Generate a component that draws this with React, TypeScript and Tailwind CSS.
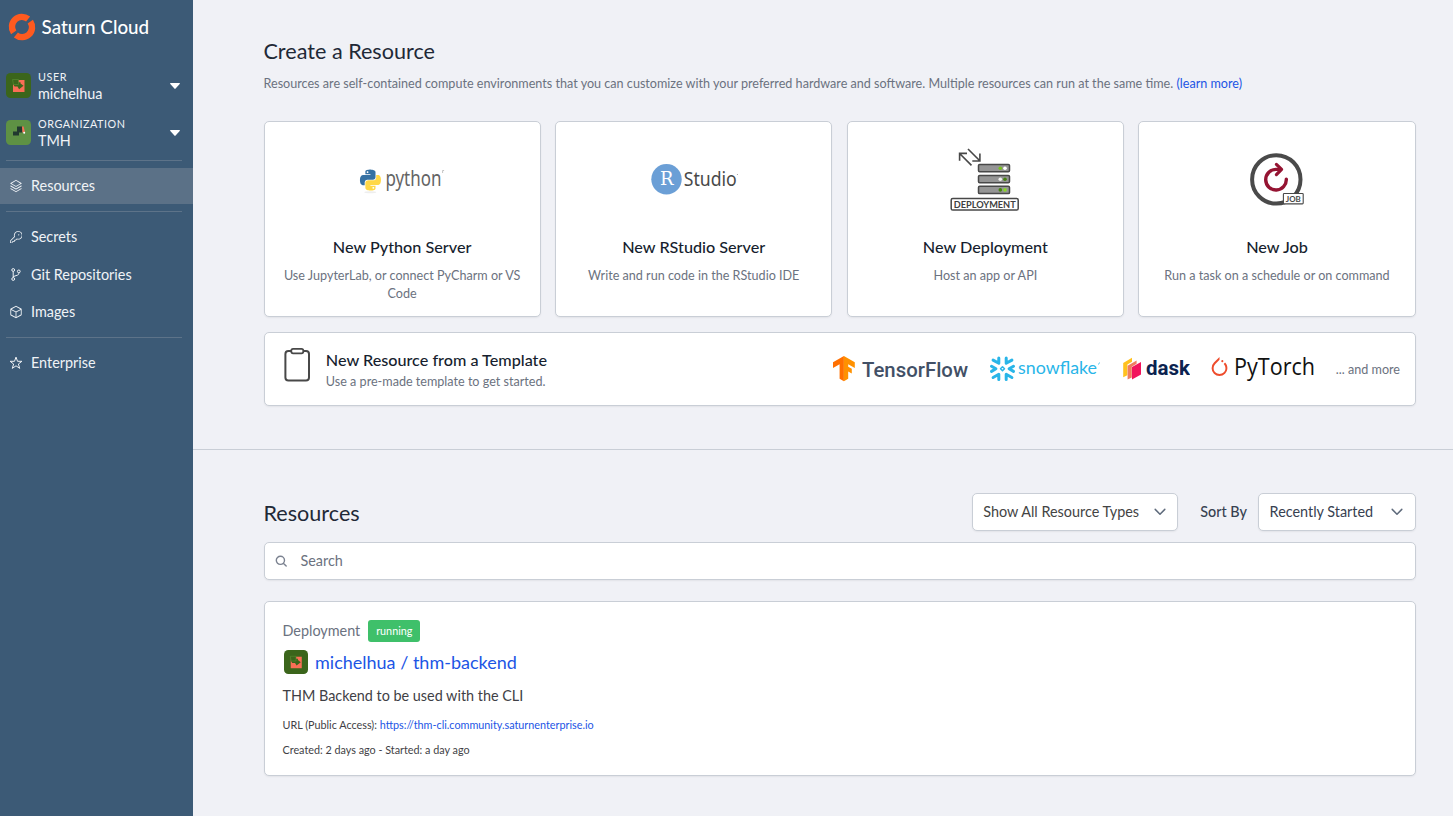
import type { ReactNode } from "react";
import { PiStack, PiCube } from "react-icons/pi";
import { GoKey } from "react-icons/go";
import { SiPytorch } from "react-icons/si";

const card = "rounded-[5px] border border-[#c9ced6] bg-white shadow-[0_1px_2px_rgba(0,0,0,0.06)]";

function SaturnLogo() {
  return (
    <svg width="28" height="28" viewBox="0 0 28 28" className="shrink-0">
      <g fill="none" stroke="#ff5a1f" strokeWidth="6.4">
        <path d="M5.7 19.4A9.9 9.9 0 0 1 20.1 6.1" />
        <path d="M22.3 8.6A9.9 9.9 0 0 1 7.9 21.9" />
      </g>
    </svg>
  );
}

function UserAvatar({ size }: { size: number }) {
  return (
    <svg width={size} height={size} viewBox="0 0 25 25" className="shrink-0">
      <rect width="25" height="25" rx="4.5" fill="#3b651b" />
      <rect x="7" y="7" width="11.5" height="12" fill="#fa6e56" />
      <path d="M6 6h6.5v3.2h2v1.2l3 2.4-4.4 3.4-1.6-2.6H8.6L7 11z" fill="#3b651b" />
      <path d="M6.5 6.5h6v5h-5z" fill="none" stroke="#5a8f34" strokeWidth=".6" />
    </svg>
  );
}

function OrgAvatar() {
  return (
    <svg width="25" height="25" viewBox="0 0 25 25" className="shrink-0">
      <rect width="25" height="25" rx="4.5" fill="#5e9144" />
      <path d="M11 6.5h5.3v6H13v3H7v-4h4z" fill="#21392f" />
      <path d="M16 6.5h1.6l1.4 6h-2.5z" fill="#fa6e56" />
      <circle cx="18.2" cy="12.8" r="1" fill="#fff" />
    </svg>
  );
}

function Account({ label, name, avatar }: { label: string; name: string; avatar: ReactNode }) {
  return (
    <div className="flex h-[47px] items-center pl-[6px] pr-[13px]">
      {avatar}
      <div className="ml-[7px] flex-1">
        <div className="text-[10.8px] leading-[15px] tracking-[0.54px]">{label}</div>
        <div className="pt-px text-[14.4px] leading-[18px]">{name}</div>
      </div>
      <svg width="10" height="6" viewBox="0 0 10 6">
        <path d="M.6 0h8.8a.5.5 0 0 1 .3.9L5.6 5.6a.8.8 0 0 1-1.2 0L.3.9A.5.5 0 0 1 .6 0z" fill="#fff" />
      </svg>
    </div>
  );
}

function StarIcon() {
  return (
    <svg width="14" height="14" viewBox="0 0 14 14" fill="none" stroke="currentColor" strokeWidth="1" strokeLinejoin="round">
      <path d="M7 1.1l1.5 4.2h4.4L9.4 8l1.3 4.4L7 9.8l-3.7 2.6L4.6 8 1.1 5.3h4.4z" />
    </svg>
  );
}

function BranchIcon() {
  return (
    <svg width="14" height="14" viewBox="0 0 14 14" fill="none" stroke="currentColor" strokeWidth="1">
      <circle cx="4.2" cy="2" r="1.4" />
      <circle cx="4.2" cy="11" r="1.4" />
      <circle cx="9.8" cy="3.4" r="1.4" />
      <path d="M4.2 3.4v6.2M9.8 4.8v.6c0 1-.6 1.5-1.5 1.8L4.2 8.6" />
    </svg>
  );
}

function NavItem({ icon, label, active }: { icon: ReactNode; label: string; active?: boolean }) {
  return (
    <div className={`flex h-[36px] items-center gap-[8px] pl-[9px] text-[14.4px] ${active ? "bg-[#5b7187]" : ""}`}>
      <span className="flex w-[14px] justify-center">{icon}</span>
      <span>{label}</span>
    </div>
  );
}

function Rule() {
  return <div className="ml-[6px] mr-[11px] h-px bg-[#5d7389]" />;
}

function Sidebar() {
  return (
    <aside className="flex w-[193px] shrink-0 flex-col bg-[#3c5a76] text-[#f0f3f6]">
      <div className="flex h-[54px] items-center gap-[5.6px] pl-[8px] text-[18.8px] font-medium text-white">
        <SaturnLogo />
        <span className="pt-px">Saturn Cloud</span>
      </div>
      <div className="h-[8px]" />
      <Account label="USER" name="michelhua" avatar={<UserAvatar size={25} />} />
      <Account label="ORGANIZATION" name="TMH" avatar={<OrgAvatar />} />
      <div className="h-[4px]" />
      <Rule />
      <div className="h-[7px]" />
      <NavItem active icon={<PiStack size={14} className="shrink-0" />} label="Resources" />
      <div className="h-[7px]" />
      <Rule />
      <div className="flex flex-col gap-[1.5px] pb-[7px] pt-[7px]">
        <NavItem icon={<GoKey size={12.5} />} label="Secrets" />
        <NavItem icon={<BranchIcon />} label="Git Repositories" />
        <NavItem icon={<PiCube size={14} className="shrink-0" />} label="Images" />
      </div>
      <Rule />
      <div className="h-[7px]" />
      <NavItem icon={<StarIcon />} label="Enterprise" />
    </aside>
  );
}

function PythonLogo() {
  return (
    <svg width="90" height="36" viewBox="-0.8 -3 90 36" overflow="visible">
      <ellipse cx="12.5" cy="27.2" rx="6" ry="1" fill="#eeeeee" />
      <g transform="translate(2.2 4.6) scale(.87)">
        <path
          fill="#3571a3"
          d="M14.25.18l.9.2.73.26.59.3.45.32.34.34.25.34.16.33.1.3.04.26.02.2-.01.13V8.5l-.05.63-.13.55-.21.46-.26.38-.3.31-.33.25-.35.19-.35.14-.33.1-.3.07-.26.04-.21.02H8.77l-.69.05-.59.14-.5.22-.41.27-.33.32-.27.35-.2.36-.15.37-.1.35-.07.32-.04.27-.02.21v3.06H3.17l-.21-.03-.28-.07-.32-.12-.35-.18-.36-.26-.36-.36-.35-.46-.32-.59-.28-.73-.21-.88-.14-1.05-.05-1.23.06-1.22.16-1.04.24-.87.32-.71.36-.57.4-.44.42-.33.42-.24.4-.16.36-.1.32-.05.24-.01h.16l.06.01h8.16v-.83H6.18l-.01-2.75-.02-.37.05-.34.11-.31.17-.28.25-.26.31-.23.38-.2.44-.18.51-.15.58-.12.64-.1.71-.06.77-.04.84-.02 1.27.05zm-6.3 1.98l-.23.33-.08.41.08.41.23.34.33.22.41.09.41-.09.33-.22.23-.34.08-.41-.08-.41-.23-.33-.33-.22-.41-.09-.41.09z"
        />
        <path
          fill="#ffd847"
          d="M21.04 6.11l.28.06.32.12.35.18.36.27.36.35.35.47.32.59.28.73.21.88.14 1.04.05 1.23-.06 1.23-.16 1.04-.24.86-.32.71-.36.57-.4.45-.42.33-.42.24-.4.16-.36.09-.32.05-.24.02-.16-.01h-8.22v.82h5.84l.01 2.76.02.36-.05.34-.11.31-.17.29-.25.25-.31.24-.38.2-.44.17-.51.15-.58.13-.64.09-.71.07-.77.04-.84.01-1.27-.04-1.07-.14-.9-.2-.73-.25-.59-.3-.45-.33-.34-.34-.25-.34-.16-.33-.1-.3-.04-.25-.02-.2.01-.13v-5.34l.05-.64.13-.54.21-.46.26-.38.3-.32.33-.24.35-.2.35-.14.33-.1.3-.06.26-.04.21-.02.13-.01h5.84l.69-.05.59-.14.5-.21.41-.28.33-.32.27-.35.2-.36.15-.36.1-.35.07-.32.04-.28.02-.21V6.07h2.09l.14.01zm-6.47 14.14l-.23.33-.08.41.08.41.23.33.33.23.41.08.41-.08.33-.23.23-.33.08-.41-.08-.41-.23-.33-.33-.23-.41-.08-.41.08z"
        />
      </g>
      <text x="27.6" y="20.6" fontSize="21" textLength="56" lengthAdjust="spacingAndGlyphs" fill="#646464" className="font-['Noto_Sans',sans-serif]">
        python
      </text>
      <path d="M84.8 8v-2.5h1.5" stroke="#aaa" strokeWidth=".7" fill="none" />
    </svg>
  );
}

function RStudioLogo() {
  return (
    <svg width="90" height="36" viewBox="0 -2 90 36" overflow="visible">
      <circle cx="17.5" cy="15.2" r="15.2" fill="#6b9fd6" />
      <text x="11" y="21.2" fontSize="18" textLength="13.5" lengthAdjust="spacingAndGlyphs" fill="#fff" className="font-['DejaVu_Serif',serif]">
        R
      </text>
      <text x="34.8" y="22.2" fontSize="19.5" textLength="53" lengthAdjust="spacingAndGlyphs" fill="#484848" className="font-['Noto_Sans',sans-serif]">
        Studio
      </text>
      <circle cx="88.4" cy="10.4" r=".5" fill="#888" />
    </svg>
  );
}

function DeploymentLogo() {
  return (
    <svg width="72" height="66" viewBox="-0.3 -0.2 72 66">
      <g stroke="#484848" strokeWidth="1.6" fill="none">
        <path d="M22.2 18.2L10.8 6.8M10.3 13.6V6.2h7.4" />
        <path d="M18.7 1.8L30 13M23 13.8h7.6V6.4" />
      </g>
      <g fill="#959595" stroke="#484848" strokeWidth="1.5">
        <rect x="29.2" y="17.2" width="31" height="7.4" rx="1.2" />
        <rect x="29.2" y="28.2" width="31" height="7.4" rx="1.2" />
        <rect x="29.2" y="39" width="31" height="7.4" rx="1.2" />
      </g>
      <circle cx="51" cy="21" r="1.8" fill="#78c21c" />
      <circle cx="55.7" cy="21" r="1.8" fill="#fff" />
      <circle cx="51" cy="32" r="1.8" fill="#eee" />
      <circle cx="55.7" cy="32" r="1.8" fill="#478211" />
      <circle cx="51" cy="42.7" r="1.8" fill="#478211" />
      <circle cx="55.7" cy="42.7" r="1.8" fill="#8ad62a" />
      <rect x="1.9" y="51.2" width="67" height="11.6" rx="1.6" fill="#fff" stroke="#484848" strokeWidth="1.5" />
      <text x="4.4" y="60.6" fontSize="10" textLength="62" lengthAdjust="spacingAndGlyphs" fill="#404040" className="font-['Lato',sans-serif] font-bold">
        DEPLOYMENT
      </text>
    </svg>
  );
}

function JobLogo() {
  return (
    <svg width="56" height="56" viewBox="0.4 0 56 56">
      <circle cx="27.7" cy="27.4" r="24.2" fill="none" stroke="#4a4a4a" strokeWidth="4" />
      <g transform="translate(.4 -.2)">
        <path d="M37.3 27.4A10.3 10.3 0 1 1 27 17.6h4.6" fill="none" stroke="#951432" strokeWidth="3.4" strokeLinecap="round" />
        <path d="M27.4 12.6l5.2 5-5.2 5.2" fill="none" stroke="#951432" strokeWidth="3.2" strokeLinecap="round" strokeLinejoin="round" />
      </g>
      <rect x="34.8" y="41.5" width="19.8" height="10.4" rx=".8" fill="#fff" stroke="#484848" strokeWidth="1.1" />
      <text x="37.2" y="49.8" fontSize="8.4" textLength="15" lengthAdjust="spacingAndGlyphs" fill="#484848" className="font-['Lato',sans-serif] font-bold">
        JOB
      </text>
    </svg>
  );
}

function ResourceCard({ logo, title, text }: { logo: ReactNode; title: string; text: string }) {
  return (
    <div className={`${card} flex h-[196px] flex-col items-center text-center`}>
      <div className="flex h-[115px] items-center justify-center">{logo}</div>
      <div className="-mt-px text-[16.2px] font-medium leading-[22px] text-[#161e2e]">{title}</div>
      <div className="mt-[9px] px-[14px] text-[12.6px] leading-[18px] text-[#6b7280]">{text}</div>
    </div>
  );
}

function TensorFlowLogo() {
  return (
    <svg width="138" height="28" viewBox="0 0 138 28">
      <path d="M12.9 1v25.2l-4.3-2.4V9.2L2 12.9V7.2z" fill="#ff6f00" />
      <path d="M12.9 1v25.2l4.3-2.4v-7.2l3.6 2v-4.8l-3.6-2V9.2l6.6 3.7V7.2z" fill="#ff9100" />
      <text x="31" y="21.8" fontSize="20" textLength="106" lengthAdjust="spacingAndGlyphs" fill="#425066" className="font-['Roboto',sans-serif] font-medium">
        TensorFlow
      </text>
    </svg>
  );
}

function SnowflakeLogo() {
  return (
    <div className="flex items-center gap-[3px]">
      <svg width="25" height="25" viewBox="-12.5 -11.8 25 25" fill="none" stroke="#29b5e8" strokeWidth="3" strokeLinecap="round" strokeLinejoin="round" overflow="visible">
        <path d="M3.7-10.7v5.2l5.7-3.2M-3.7-10.7v5.2l-5.7-3.2M3.7 10.7V5.5l5.7 3.2M-3.7 10.7V5.5l-5.7 3.2" />
        <path d="M11-2.6L6.6 0 11 2.6M-11-2.6L-6.6 0-11 2.6" />
        <path d="M0-2L2 0 0 2-2 0z" strokeWidth="1.5" />
      </svg>
      <svg width="83" height="26" viewBox="0 0 83 26">
        <text x="0" y="17.5" fontSize="18" textLength="79" lengthAdjust="spacingAndGlyphs" fill="#29b5e8" className="font-['Lato',sans-serif]">
          snowflake
        </text>
        <path d="M80.5 8.5l1-2" stroke="#29b5e8" strokeWidth=".8" />
      </svg>
    </div>
  );
}

function DaskLogo() {
  return (
    <svg width="68" height="26" viewBox="0 0 68 26">
      <g transform="translate(0 -.6)">
        <path d="M1.2 7.6L10 2.4v4L5.4 9.2v10.6l-4.2 2.1z" fill="#ffc11e" />
        <path d="M5.6 10.4L14.6 5v3.4L9.8 11.3V22l-4.2 2z" fill="#ef7d5f" />
        <path d="M10 11.7l9-5v12.5l-9 5z" fill="#f2145c" />
      </g>
      <text x="24" y="18.6" fontSize="20" textLength="44" lengthAdjust="spacingAndGlyphs" fill="#0b2350" className="font-['Roboto',sans-serif] font-bold">
        dask
      </text>
    </svg>
  );
}

function PyTorchLogo() {
  return (
    <div className="flex items-center gap-[4.5px]">
      <SiPytorch size={19} color="#ee4c2c" className="mb-[6px]" />
      <svg width="82" height="36" viewBox="0 -2 82 36" overflow="visible">
        <text x="0" y="22" fontSize="24" textLength="81" lengthAdjust="spacingAndGlyphs" fill="#111" className="font-['Open_Sans',sans-serif]">
          PyTorch
        </text>
      </svg>
    </div>
  );
}

function Chevron() {
  return (
    <svg width="12" height="8" viewBox="0 0 12 8">
      <path d="M1.2 1.4L6 6.2l4.8-4.8" fill="none" stroke="#5f6b7c" strokeWidth="1.5" strokeLinecap="round" strokeLinejoin="round" />
    </svg>
  );
}

export default function App() {
  return (
    <div className="flex h-[816px] w-[1453px] overflow-hidden bg-[#f0f1f6] font-['Lato',sans-serif]">
      <Sidebar />
      <main className="flex min-w-0 flex-1 flex-col">
        <section className="h-[450px] border-b border-[#c9ced6] pl-[70.5px] pr-[37.4px] pt-[37px]">
          <h1 className="text-[21.6px] leading-[29px] text-[#1f2937]">Create a Resource</h1>
          <p className="mt-[9px] text-[12.6px] leading-[18px] text-[#6b7280]">
            Resources are self-contained compute environments that you can customize with your preferred hardware and software. Multiple
            resources can run at the same time. <a className="text-[#1c55e5]">(learn more)</a>
          </p>
          <div className="mt-[28px] grid grid-cols-4 gap-[14.4px]">
            <ResourceCard logo={<PythonLogo />} title="New Python Server" text="Use JupyterLab, or connect PyCharm or VS Code" />
            <ResourceCard logo={<RStudioLogo />} title="New RStudio Server" text="Write and run code in the RStudio IDE" />
            <ResourceCard logo={<DeploymentLogo />} title="New Deployment" text="Host an app or API" />
            <ResourceCard logo={<JobLogo />} title="New Job" text="Run a task on a schedule or on command" />
          </div>
          <div className={`${card} mt-[15px] flex h-[74px] items-center pl-[18px] pr-[14.6px]`}>
            <svg width="28" height="36" viewBox="0 0 28 36" className="mb-[8px]">
              <rect x="2.4" y="4" width="23.6" height="29.6" rx="3" fill="#fff" stroke="#484848" strokeWidth="2" />
              <rect x="8.3" y="1.8" width="12" height="4.6" rx="1.8" fill="#fff" stroke="#484848" strokeWidth="1.8" />
            </svg>
            <div className="ml-[15.3px] mt-[3px]">
              <div className="text-[16.2px] font-medium leading-[22px] text-[#161e2e]">New Resource from a Template</div>
              <div className="pt-px text-[12.6px] leading-[20px] text-[#6b7280]">Use a pre-made template to get started.</div>
            </div>
            <div className="ml-auto flex items-center">
              <TensorFlowLogo />
              <span className="ml-[20.7px]">
                <SnowflakeLogo />
              </span>
              <span className="ml-[21px]">
                <DaskLogo />
              </span>
              <span className="ml-[20.3px]">
                <PyTorchLogo />
              </span>
              <span className="ml-[20px] pt-[2px] text-[12.6px] text-[#6b7280]">... and more</span>
            </div>
          </div>
        </section>
        <section className="pl-[70.5px] pr-[37.4px] pt-[43px]">
          <div className="flex h-[38px] items-center">
            <h2 className="mt-[3px] flex-1 text-[21.6px] leading-[29px] text-[#1f2937]">Resources</h2>
            <div className={`${card} flex h-[38px] w-[206px] items-center justify-between pl-[10.4px] pr-[11px] text-[14.4px] text-[#444]`}>
              Show All Resource Types
              <Chevron />
            </div>
            <span className="ml-[22.3px] mr-[10.7px] text-[14.4px] font-medium text-[#374151]">Sort By</span>
            <div className={`${card} flex h-[38px] w-[158px] items-center justify-between pl-[11px] pr-[12px] text-[14.4px] text-[#374151]`}>
              Recently Started
              <Chevron />
            </div>
          </div>
          <div className={`${card} mt-[11px] flex h-[38px] items-center gap-[13px] pl-[10px] text-[14.4px] text-[#6b7280]`}>
            <svg width="13" height="13" viewBox="0 0 13 13" fill="none" stroke="#7b8290" strokeWidth="1.4" strokeLinecap="round">
              <circle cx="5.4" cy="5.3" r="4.1" />
              <path d="M8.5 8.4l2.7 2.7" />
            </svg>
            Search
          </div>
          <div className={`${card} mt-[21px] h-[175px] px-[18px] pt-[18px]`}>
            <div className="flex h-[22px] items-center gap-[8px]">
              <span className="text-[14.4px] text-[#6b7280]">Deployment</span>
              <span className="flex h-[22px] w-[52px] items-center justify-center rounded-[3px] bg-[#3fc06a] text-[10.8px] text-white">running</span>
            </div>
            <div className="mt-[7px] flex h-[25px] items-center gap-[7.5px]">
              <span className="ml-px">
                <UserAvatar size={24} />
              </span>
              <a className="pt-[2px] text-[18px] text-[#1c55e5]">michelhua / thm-backend</a>
            </div>
            <div className="mt-[11px] text-[14.4px] leading-[22px] text-[#3f3f46]">THM Backend to be used with the CLI</div>
            <div className="mt-[10px] text-[10.8px] leading-[16px] text-[#3f3f46]">
              URL (Public Access): <a className="text-[#1c55e5]">https://thm-cli.community.saturnenterprise.io</a>
            </div>
            <div className="mt-[9px] text-[10.8px] leading-[16px] text-[#3f3f46]">Created: 2 days ago - Started: a day ago</div>
          </div>
        </section>
      </main>
    </div>
  );
}
